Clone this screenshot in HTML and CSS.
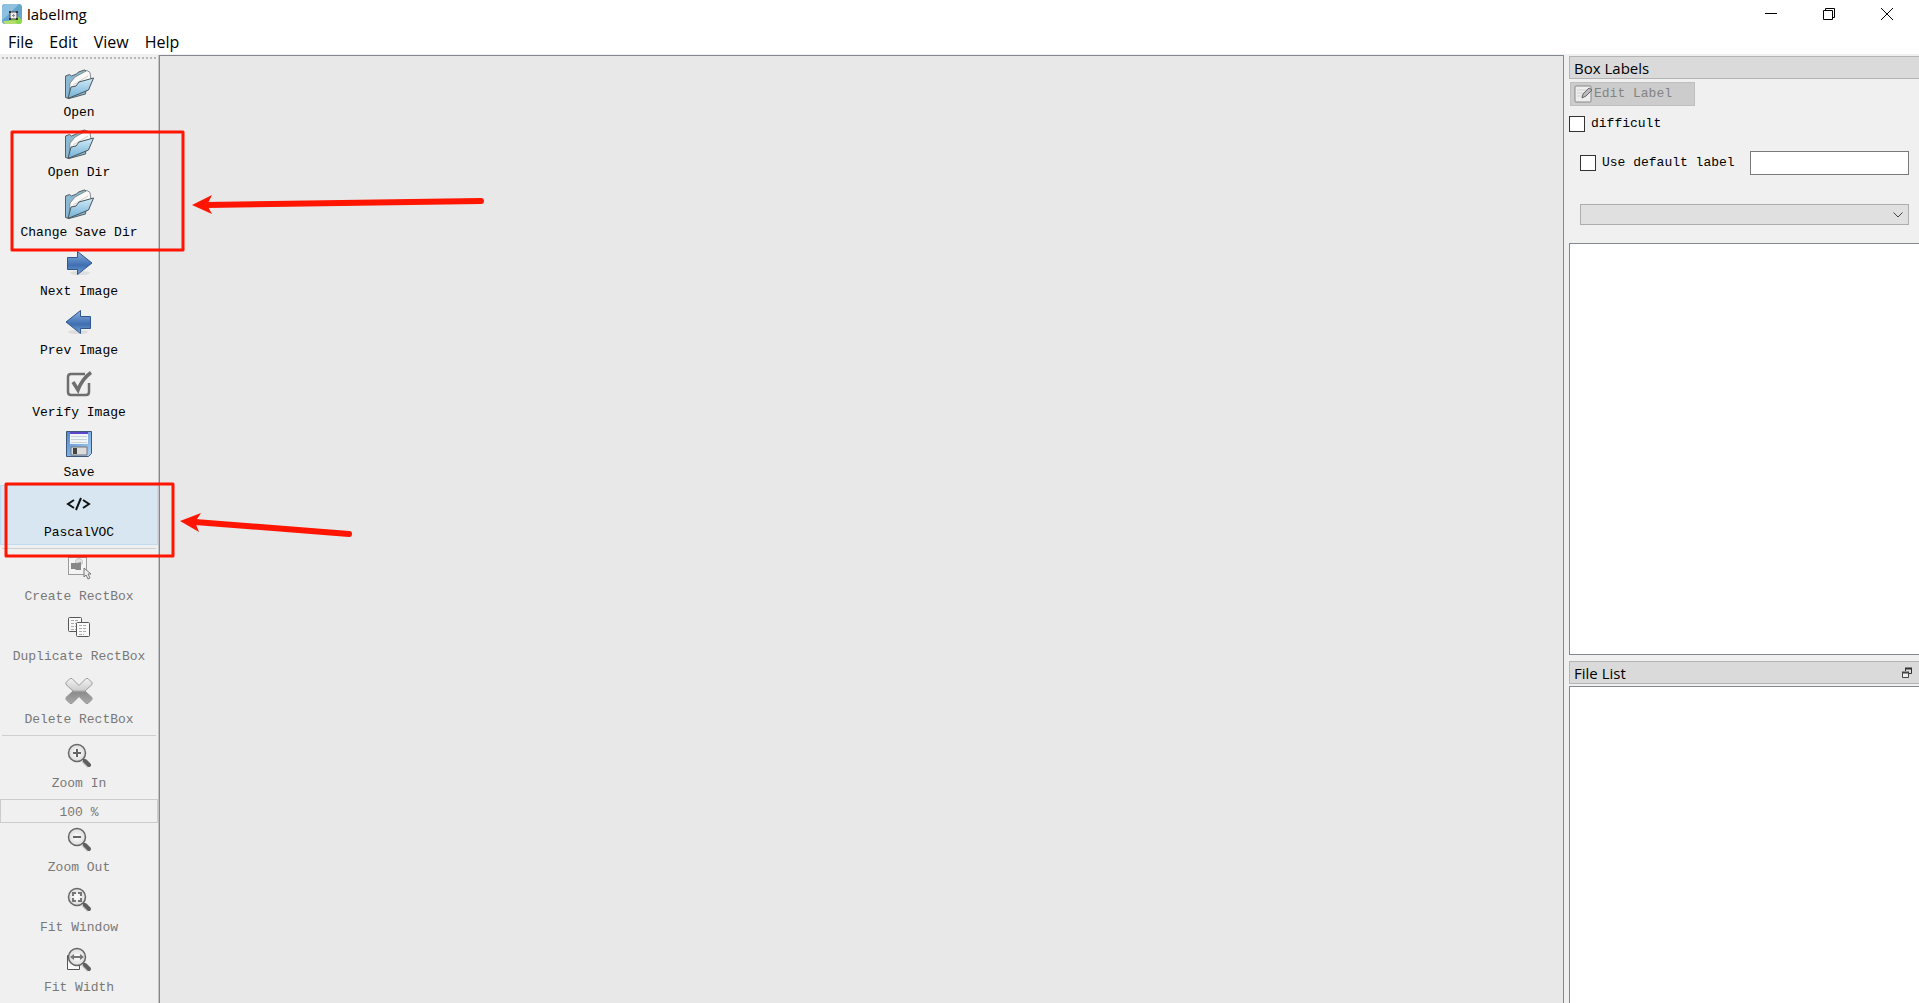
FILE: index.html
```
<!DOCTYPE html>
<html lang="en">
<head>
    <meta charset="utf-8">
    <title>labelImg</title>
    <link rel="stylesheet" href="styles.css">
</head>
<body>
    <svg class="defs" width="0" height="0" aria-hidden="true">
        <defs>
            <linearGradient id="blue" x1="0" y1="0" x2="0" y2="1">
                <stop offset="0" stop-color="#d3ebf6"/>
                <stop offset="1" stop-color="#6fb0d6"/>
            </linearGradient>
            <linearGradient id="arrow" x1="0" y1="0" x2="0" y2="1">
                <stop offset="0" stop-color="#8fb0dc"/>
                <stop offset="0.5" stop-color="#4a7abb"/>
                <stop offset="0.6" stop-color="#3f6fb0"/>
                <stop offset="1" stop-color="#7ba5d8"/>
            </linearGradient>
            <linearGradient id="disk" x1="0" y1="0" x2="1" y2="1">
                <stop offset="0" stop-color="#4f88d0"/>
                <stop offset="1" stop-color="#acd2f6"/>
            </linearGradient>
            <linearGradient id="cross" x1="0" y1="0" x2="0" y2="1">
                <stop offset="0" stop-color="#f2f2f2"/>
                <stop offset="0.45" stop-color="#cfcfcf"/>
                <stop offset="0.55" stop-color="#8c8c8c"/>
                <stop offset="1" stop-color="#a8a8a8"/>
            </linearGradient>
            <radialGradient id="lens">
                <stop offset="0" stop-color="#ffffff"/>
                <stop offset="1" stop-color="#dcdcdc"/>
            </radialGradient>
            <symbol id="folder" viewBox="0 0 30 30">
                <path d="M1.500 7l4-1.500 2 1.500 5-2 2-2 6-2 2 1 1 5-2 18L5 29.500l-3.500-1z" fill="#8ab9d3" stroke="#555d63"/>
                <path d="M6 14l5-6L23 1.500l3 2 1 7-18 12-4 4z" fill="#fafafa" stroke="#8b8b8b"/>
                <path d="M9 16L24 7M8 19l14-8" stroke="#d0d0d0"/>
                <path d="M4 29.500L7 18l5-1 3-4 14.500-4-5 12z" fill="url(#blue)" stroke="#46545e"/>
            </symbol>
            <symbol id="magnifier" viewBox="0 0 30 30">
                <path d="M19 20l6 6" stroke="#c9c9c9" stroke-width="5"/>
                <path d="M18 18l3 3" stroke="#555" stroke-width="2"/>
                <path d="M21 21l4 4" stroke="#5f5f5f" stroke-width="4" stroke-linecap="round"/>
                <circle cx="13" cy="13" r="8.500" fill="url(#lens)" stroke="#666" stroke-width="1.500"/>
            </symbol>
        </defs>
    </svg>

    <header class="title-bar">
        <svg class="app-icon" viewBox="0 0 20 20">
            <rect width="20" height="20" rx="3" fill="#66a5cb"/>
            <path d="M0 3l3-3h14L5 12 0 16z" fill="#8dc1df"/>
            <path d="M4 20l9-10 7 6v2l-2 2z" fill="#8fda4c"/>
            <path d="M1 17h12l2 3H3z" fill="#b4df6e"/>
            <rect x="8" y="8" width="7" height="7" fill="#eee" stroke="#444"/>
            <path d="M7 7h2v2H7zM14 7h2v2h-2zM7 14h2v2H7zM14 14h2v2h-2z" fill="#333"/>
            <path d="M11.500 10v3M10 11.500h3" stroke="#888"/>
        </svg>
        <h1>labelImg</h1>
        <div class="window-buttons">
            <button type="button" aria-label="Minimize"><svg width="12" height="12"><path d="M0 5.500h12" stroke="#000"/></svg></button>
            <button type="button" aria-label="Restore"><svg width="12" height="12"><path d="M.5 2.500h9v9h-9zM2.500 2.500v-2h9v9h-2" fill="none" stroke="#000"/></svg></button>
            <button type="button" aria-label="Close"><svg width="12" height="12"><path d="M0 0l12 12M12 0L0 12" stroke="#000"/></svg></button>
        </div>
    </header>

    <nav class="menu-bar">
        <button type="button">File</button>
        <button type="button">Edit</button>
        <button type="button">View</button>
        <button type="button">Help</button>
    </nav>

    <main>
        <div class="toolbar">
            <div class="grip"></div>
            <button type="button" class="tool"><svg><use href="#folder"/></svg>Open</button>
            <button type="button" class="tool"><svg><use href="#folder"/></svg>Open Dir</button>
            <button type="button" class="tool short"><svg><use href="#folder"/></svg>Change Save Dir</button>
            <button type="button" class="tool short">
                <svg viewBox="0 0 30 30">
                    <ellipse cx="16" cy="25" rx="10" ry="2" fill="#ddd"/>
                    <path d="M3.500 9.500h10v-6L28 15 13.500 26.500v-5h-10z" fill="url(#arrow)" stroke="#2f568d"/>
                </svg>
                Next Image
            </button>
            <button type="button" class="tool short">
                <svg viewBox="0 0 30 30">
                    <ellipse cx="14" cy="25" rx="10" ry="2" fill="#ddd"/>
                    <path d="M26.500 9.500h-10v-6L2 15l14.500 11.500v-5h10z" fill="url(#arrow)" stroke="#2f568d"/>
                </svg>
                Prev Image
            </button>
            <button type="button" class="tool tall">
                <svg viewBox="0 0 30 30" fill="none" stroke="#6e6e6e">
                    <path d="M21 5H7Q4 5 4 8v15q0 3 3 3h15q3 0 3-3v-9" stroke-width="2.500"/>
                    <path d="M9 13l5 8Q18 10 27 3.500" stroke-width="3.500"/>
                </svg>
                Verify Image
            </button>
            <button type="button" class="tool">
                <svg viewBox="0 0 30 30">
                    <path d="M2.500 2.500h25v22l-3 3h-22z" fill="url(#disk)" stroke="#3d5878"/>
                    <path d="M6 3h18v12H6z" fill="#f0f4f6"/>
                    <path d="M6 3h18v2H6z" fill="#5948c8"/>
                    <path d="M7 7.500h16M7 10.500h16M7 13.500h16" stroke="#c5d3d8"/>
                    <path d="M7 18h16v8H7z" fill="#dcdcdc" stroke="#767676"/>
                    <path d="M9 19h4v6H9z" fill="#444"/>
                </svg>
                Save
            </button>
            <button type="button" class="tool active">
                <svg viewBox="0 0 30 30" fill="none" stroke="#111" stroke-width="2">
                    <path d="M10 11l-6 4 6 4M19 11l6 4-6 4M17 9l-5 12"/>
                </svg>
                PascalVOC
            </button>
            <hr>
            <button type="button" class="tool" disabled>
                <svg viewBox="0 0 30 30">
                    <rect x="4.500" y="4.500" width="18" height="17" fill="#f4f4f4" stroke="#444" stroke-dasharray="1 1"/>
                    <circle cx="15" cy="9" r="3.500" fill="#e4e4e4" stroke="#c4c4c4"/>
                    <path d="M7 10h6l4-1v8h-5l-1-1H7z" fill="#888"/>
                    <path d="M20 15v9l2-2 2 4 2-1-2-4h3z" fill="#eee" stroke="#777"/>
                </svg>
                Create RectBox
            </button>
            <button type="button" class="tool" disabled>
                <svg viewBox="0 0 30 30">
                    <rect x="4.500" y="4.500" width="13" height="14" rx="1" fill="#f7f7f7" stroke="#555"/>
                    <path d="M7 7.500h8M7 10.500h8M7 13.500h8M7 16.500h5" stroke="#aaa" stroke-dasharray="3 1"/>
                    <rect x="12.500" y="9.500" width="13" height="14" rx="1" fill="#fafafa" stroke="#555"/>
                    <path d="M15 12.500h8M15 15.500h8M15 18.500h8M15 21.500h5" stroke="#aaa" stroke-dasharray="3 1"/>
                </svg>
                Duplicate RectBox
            </button>
            <button type="button" class="tool tall" disabled>
                <svg viewBox="0 0 30 30">
                    <path d="M6 2.500h2l7 7 7-7h2l4 4v2l-7 6.500 7 6.500v2l-4 4h-2l-7-7-7 7H6l-4-4v-2L9 15 2 8.500v-2z" fill="url(#cross)" stroke="#999" stroke-linejoin="round"/>
                </svg>
                Delete RectBox
            </button>
            <hr>
            <button type="button" class="tool" disabled>
                <svg viewBox="0 0 30 30"><use href="#magnifier"/><path d="M9 13h8M13 9v8" stroke="#666" stroke-width="2"/></svg>
                Zoom In
            </button>
            <input type="text" class="zoom-value" value="100 %" aria-label="Zoom level" disabled>
            <button type="button" class="tool compact" disabled>
                <svg viewBox="0 0 30 30"><use href="#magnifier"/><path d="M9 13h8" stroke="#666" stroke-width="2"/></svg>
                Zoom Out
            </button>
            <button type="button" class="tool" disabled>
                <svg viewBox="0 0 30 30"><use href="#magnifier"/><path d="M9 12V9h3M14 9h3v3M17 14v3h-3M12 17H9v-3" fill="none" stroke="#777" stroke-width="2"/></svg>
                Fit Window
            </button>
            <button type="button" class="tool" disabled>
                <svg viewBox="0 0 30 30">
                    <path d="M3.500 11.500h12v14h-12z" fill="#fafafa" stroke="#555"/>
                    <use href="#magnifier"/>
                    <path d="M8 13h10" stroke="#777" stroke-width="2"/>
                    <path d="M6 13l4-3v6zM20 13l-4-3v6z" fill="#777"/>
                </svg>
                Fit Width
            </button>
        </div>

        <div class="canvas"></div>

        <aside class="dock">
            <h2>Box Labels</h2>
            <div class="label-options">
                <button type="button" class="edit-label" disabled>
                    <svg viewBox="0 0 18 18">
                        <rect x="1" y="1" width="16" height="16" rx="1" fill="#eee" stroke="#888"/>
                        <path d="M3 5h10M3 8h8M3 11h6" stroke="#d0d0d0"/>
                        <path d="M8 13l1-4 6-6 3 2-6 6z" fill="#bbb" stroke="#666"/>
                    </svg>
                    Edit Label
                </button>
                <label class="check"><input type="checkbox">difficult</label>
                <div class="default-label">
                    <label class="check"><input type="checkbox">Use default label</label>
                    <input type="text" class="label-name" aria-label="Default label">
                </div>
                <div class="select-box">
                    <select aria-label="Label filter" disabled><option></option></select>
                    <svg width="10" height="6"><path d="M.5 .5L5 5 9.500 .5" fill="none" stroke="#444"/></svg>
                </div>
            </div>
            <div class="list box-list"></div>
            <h2>
                File List
                <button type="button" class="float-button" aria-label="Float">
                    <svg width="10" height="11"><path d="M3.500 4V1.500h6v5H7" fill="none" stroke="#333"/><path d="M3 1.500h7" stroke="#333" stroke-width="2"/><path d="M.5 5.500h6v5h-6z" fill="#eee" stroke="#444"/><path d="M0 5.500h7" stroke="#444" stroke-width="2"/></svg>
                </button>
            </h2>
            <div class="list file-list"></div>
        </aside>
    </main>

    <!-- red marks drawn over the window -->
    <svg class="marks" width="500" height="570" aria-hidden="true">
        <g fill="none" stroke="#ff1500" stroke-width="3" stroke-linejoin="round">
            <rect x="12" y="132" width="171" height="118"/>
            <rect x="6" y="484" width="167" height="72"/>
        </g>
        <g stroke="#ff1500" stroke-width="6" stroke-linecap="round">
            <path d="M206 205L481 201"/>
            <path d="M195 522L349 534"/>
        </g>
        <g fill="#ff1500">
            <path d="M192 205l20-10-5 10 5 9z"/>
            <path d="M180 521l21-8-6 9 4 10z"/>
        </g>
    </svg>
</body>
</html>
```
FILE: styles.css
```
* {
    box-sizing: border-box;
}

body {
    display: flex;
    flex-direction: column;
    min-height: 100vh;
    margin: 0;
    background-color: #f0f0f0;
    color: #000;
    font-family: "Liberation Mono", monospace;
    font-size: 13px;
    line-height: 16px;
}

button, input, select {
    margin: 0;
    padding: 0;
    border: none;
    border-radius: 0;
    background: none;
    color: inherit;
    font: inherit;
}

.defs {
    position: absolute;
}

/* Title and menu */
.title-bar {
    display: flex;
    align-items: center;
    height: 28px;
    padding: 0 3px 0 2px;
    background-color: #fff;
}

.app-icon {
    width: 20px;
    height: 20px;
    margin-right: 5px;
}

h1, h2, .menu-bar {
    margin: 0;
    font-family: "Open Sans", sans-serif;
    font-size: 15px;
    font-weight: normal;
    line-height: 22px;
}

.window-buttons {
    display: flex;
    margin-left: auto;
}

.window-buttons button {
    display: flex;
    align-items: center;
    justify-content: center;
    width: 58px;
    height: 28px;
}

.menu-bar {
    display: flex;
    gap: 16px;
    height: 26px;
    padding: 3px 8px 1px;
    background-color: #fff;
    font-size: 16px;
}

main {
    display: flex;
    flex: 1;
    padding-top: 1px;
}

/* Toolbar */
.toolbar {
    display: flex;
    flex-direction: column;
    width: 159px;
    border-right: 1px solid #c4c4c8;
}

.grip {
    height: 2px;
    margin: 2px 2px 6px;
    background: repeating-linear-gradient(90deg, #b8b8b8 0 2px, #f0f0f0 2px 4px);
}

.tool {
    display: flex;
    flex-direction: column;
    align-items: center;
    gap: 6px;
    height: 60px;
    padding-top: 4px;
    white-space: nowrap;
}

.tool svg {
    width: 30px;
    height: 30px;
}

.tool.short {
    height: 59px;
}

.tool.tall {
    height: 63px;
    padding-top: 7px;
}

.tool.compact {
    height: 57px;
    padding-top: 1px;
}

.tool.active {
    background-color: #d8e6f1;
    box-shadow: inset 0 0 0 1px #c0dcf3;
}

.tool:disabled {
    color: #787878;
}

.toolbar hr {
    width: auto;
    height: 1px;
    margin: 3px 2px 0;
    border: none;
    background-color: #cfcfcf;
}

.zoom-value {
    width: 100%;
    height: 24px;
    padding-top: 2px;
    margin-top: 3px;
    border: 1px solid #ccc;
    color: #787878;
    text-align: center;
}

.canvas {
    flex: 1;
    border: 1px solid #828790;
    border-bottom: none;
    background-color: #e8e8e8;
}

/* Right side */
.dock {
    display: flex;
    flex-direction: column;
    width: 350px;
    margin-left: 5px;
    padding-top: 1px;
}

h2 {
    display: flex;
    align-items: center;
    justify-content: space-between;
    height: 23px;
    padding: 0 7px 0 4px;
    border: 1px solid #b4b4b4;
    border-right: none;
    background-color: #dadada;
}

.float-button {
    display: flex;
}

.label-options {
    padding: 3px 10px 18px 0;
}

.edit-label {
    display: flex;
    align-items: center;
    gap: 2px;
    width: 125px;
    height: 24px;
    margin: 0 0 9px 1px;
    padding-left: 3px;
    border: 1px solid #bfbfbf;
    background-color: #ccc;
    color: #838383;
}

.edit-label svg {
    width: 18px;
    height: 18px;
}

.check {
    display: flex;
    align-items: center;
    gap: 6px;
    line-height: 18px;
}

.check input {
    appearance: none;
    width: 16px;
    height: 16px;
    border: 1px solid #333;
    background-color: #fff;
}

.default-label {
    display: flex;
    align-items: center;
    gap: 15px;
    margin: 18px 0 29px 11px;
}

.label-name {
    flex: 1;
    min-width: 0;
    height: 24px;
    border: 1px solid #7a7a7a;
    background-color: #fff;
}

.select-box {
    display: grid;
    align-items: center;
    margin-left: 11px;
}

.select-box select, .select-box svg {
    grid-area: 1 / 1;
}

.select-box select {
    appearance: none;
    width: 100%;
    height: 21px;
    border: 1px solid #adadad;
    background-color: #e0e0e0;
    opacity: 1;
}

.select-box svg {
    justify-self: end;
    margin-right: 6px;
    pointer-events: none;
}

.list {
    border: 1px solid #828790;
    border-right: none;
    background-color: #fff;
}

.box-list {
    flex: 13 1 0;
    margin-bottom: 6px;
}

.file-list {
    flex: 10 1 0;
    margin-top: 2px;
    border-bottom: none;
}

.marks {
    position: absolute;
    top: 0;
    left: 0;
    pointer-events: none;
}
```
